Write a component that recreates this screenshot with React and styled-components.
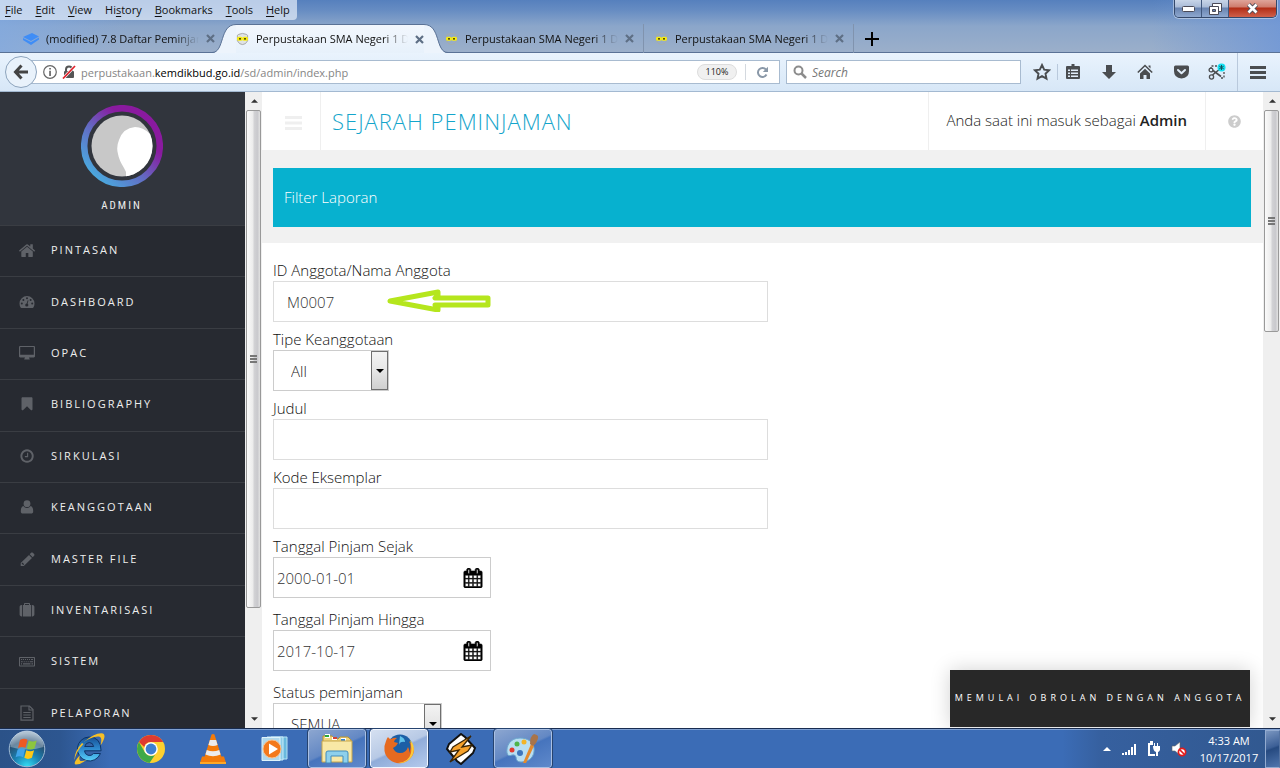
import React from "react";
import styled, { createGlobalStyle, css } from "styled-components";
import { FaQuestionCircle } from "react-icons/fa";

const ui = `"Open Sans", "Noto Sans", sans-serif`;

const Global = createGlobalStyle`
  * { box-sizing: border-box; }
  html, body, #root { height: 100%; }
  body { margin: 0; font-family: ${ui}; overflow: hidden; }
  button, input, select { font-family: inherit; margin: 0; }
  button { border: 0; background: none; padding: 0; color: inherit; }
  a { color: inherit; text-decoration: none; }
  ul { list-style: none; margin: 0; padding: 0; }
  svg { display: block; }
`;

const Screen = styled.div`
  height: 100vh;
  display: flex;
  flex-direction: column;
  overflow: hidden;
  color: #111;
`;

/* ---------- browser frame ---------- */
const Frame = styled.header`
  position: relative;
  flex: none;
  font-size: 11px;
  background:
    linear-gradient(90deg, rgba(130,170,225,.75), rgba(130,170,225,0) 10%, rgba(130,170,225,0) 90%, rgba(110,150,215,.8)),
    linear-gradient(#5680bd 0, #668cc2 10px, #8ba6ca 26px, #9bafca 52px);
`;
const MenuBar = styled.nav`
  display: flex;
  align-items: center;
  width: max-content;
  height: 20px;
  gap: 13px;
  padding: 0 7px 2px 5px;
  border-bottom-right-radius: 4px;
  background: rgba(225, 234, 248, .72);
  u { text-underline-offset: 2px; }
`;
const WindowControls = styled.div`
  position: absolute;
  top: 0;
  right: 3px;
  display: flex;
  height: 18px;
  border: 1px solid #34486a;
  border-top: 0;
  border-radius: 0 0 5px 5px;
  overflow: hidden;
  box-shadow: 0 0 0 1px rgba(255,255,255,.4);
`;
const WindowButton = styled.button`
  display: grid;
  place-items: center;
  width: ${p => (p.$close ? 47 : 27)}px;
  border-right: ${p => (p.$close ? 0 : "1px solid #40577d")};
  background: ${p => p.$close
    ? "linear-gradient(#dfa59a 0, #cf7c6c 7px, #b22d16 8px, #d0604a 17px)"
    : "linear-gradient(#c8d5e8 0, #a9bbd7 7px, #6883b0 8px, #8ea8cf 17px)"};
`;
const Tabs = styled.div`
  display: flex;
  height: 33px;
  padding: 4px 0 0 14px;
  border-bottom: 1px solid #5a7296;
`;
const Tab = styled.div`
  display: flex;
  align-items: center;
  width: 210px;
  height: 29px;
  padding: 0 9px;
  gap: 7px;
  ${p => p.$divided && css`
    padding-left: 11px;
    border-right: 1px solid #8093ae;
  `}
`;
const ActiveTab = styled.div`
  position: relative;
  z-index: 1;
  display: flex;
  height: 29px;
  margin: 0 -14px 0 -12px;
  width: 236px;
`;
const ActiveBody = styled.div`
  flex: 1;
  display: flex;
  align-items: center;
  gap: 7px;
  min-width: 0;
  border-top: 1px solid #5a7296;
  background: linear-gradient(#f2f7fd, #e7f1fb);
`;
const TabTitle = styled.span`
  flex: 1;
  overflow: hidden;
  white-space: nowrap;
  line-height: 18px;
  mask-image: linear-gradient(90deg, #000 84%, transparent);
`;
const NewTab = styled.button`
  display: grid;
  place-items: center;
  width: 36px;
  height: 29px;
`;
const Toolbar = styled.div`
  display: flex;
  align-items: center;
  height: 39px;
  padding: 0 4px 0 5px;
  border-bottom: 1px solid #a3b9d1;
  background: linear-gradient(#e9f3fd, #d7e7f7);
  color: #4a4d50;
`;
const Back = styled.button`
  z-index: 1;
  flex: none;
  display: grid;
  place-items: center;
  width: 32px;
  height: 32px;
  border: 1px solid #8da4bd;
  border-radius: 50%;
  background: #e9f2fb;
`;
const AddressBar = styled.div`
  flex: 1;
  display: flex;
  align-items: center;
  gap: 5px;
  height: 24px;
  margin: 0 6px 0 -7px;
  padding-left: 12px;
  border: 1px solid #a8bbd0;
  background: #fff;
`;
const AddressText = styled.span`
  flex: 1;
  font-size: 11px;
  color: #858585;
  b { font-weight: 400; color: #000; }
`;
const ZoomBadge = styled.button`
  width: 40px;
  height: 16px;
  border: 1px solid #ddd;
  border-radius: 8px;
  background: #f0f0f0;
  color: #222;
  font-size: 9px;
  line-height: 12px;
`;
const Reload = styled.button`
  display: grid;
  place-items: center;
  width: 34px;
  height: 16px;
  margin-left: 3px;
  border-left: 1px solid #d4d9df;
`;
const SearchBox = styled.label`
  display: flex;
  align-items: center;
  gap: 5px;
  width: 235px;
  height: 24px;
  padding: 0 6px;
  border: 1px solid #a8bbd0;
  background: #fff;
  input {
    flex: 1; min-width: 0; border: 0; outline: 0; padding: 0; background: none;
    font-size: 12px; font-style: italic;
  }
  input::placeholder { color: #777; opacity: 1; }
`;
const ToolButton = styled.button`
  display: grid;
  place-items: center;
  width: ${p => (p.$narrow ? 30 : 36)}px;
  height: 30px;
  margin-right: ${p => (p.$spaced ? 3 : 0)}px;
`;
const ToolGroup = styled.div`
  display: flex;
  align-items: center;
  margin-left: 6px;
`;
const Rule = styled.i`
  width: 1px;
  height: ${p => (p.$tall ? 38 : 16)}px;
  margin: ${p => (p.$tall ? "0 2px" : 0)};
  background: #b9c9dc;
`;

/* ---------- page ---------- */
const Page = styled.div`
  flex: 1;
  min-height: 0;
  display: flex;
  background: #fff;
`;
const Sidebar = styled.aside`
  flex: none;
  width: 245px;
  overflow: hidden;
  background: #272a31;
  color: #eee;
`;
const Profile = styled.div`
  display: flex;
  flex-direction: column;
  align-items: center;
  height: 133px;
  padding: 13px 2px 0 0;
  gap: 11px;
  background: #31353d;
`;
const ProfileName = styled.strong`
  font: 400 11px/16px "Liberation Sans Narrow", "Roboto Condensed", ${ui};
  letter-spacing: 2px;
`;
const SideList = styled.ul`
  display: grid;
  grid-template-rows: repeat(10, 1fr);
  height: 514px;
`;
const SideItem = styled.li`
  border-top: 1px solid #3a3d43;
  a {
    display: flex;
    align-items: center;
    gap: 14px;
    height: 100%;
    padding: 0 0 2px 17px;
    font-size: 11px;
    letter-spacing: 2px;
    line-height: 16px;
  }
  svg { color: #5f6268; }
`;
const Scroll = styled.div`
  flex: none;
  display: flex;
  flex-direction: column;
  width: 17px;
  padding-left: 1px;
  background: #efefef;
`;
const ScrollArrow = styled.button`
  display: grid;
  place-items: center;
  height: 18px;
`;
const ScrollTrack = styled.div`
  flex: 1;
  padding-right: 1px;
`;
const ScrollThumb = styled.div`
  display: grid;
  place-items: center;
  height: ${p => p.$size};
  border: 1px solid #999;
  border-radius: 2px;
  background: linear-gradient(90deg, #fafafa, #ececec 45%, #d2d2d5 55%, #c9c9cd 80%, #e2e2e2);
`;
const Main = styled.main`
  position: relative;
  flex: 1;
  min-width: 0;
  overflow: hidden;
  font-weight: 300;
  font-size: 15px;
`;
const TopBar = styled.div`
  display: flex;
  height: 58px;
`;
const TopCell = styled.div`
  display: grid;
  place-items: center;
  flex: none;
  width: ${p => (p.$kind === "text" ? "auto" : "58px")};
  padding: ${p => ({ menu: "4px 0 0 5px", text: "0 18px 2px 17px" })[p.$kind] || "0"};
  border-left: ${p => (p.$kind === "menu" ? "0" : "1px solid #efefef")};
  color: #222;
  b { font-weight: 600; }
`;
const Title = styled.h1`
  flex: 1;
  margin: 0;
  padding-left: 11px;
  border-left: 1px solid #efefef;
  font-size: 22px;
  letter-spacing: 1px;
  line-height: 58px;
  font-weight: 300;
  color: #14a5cb;
`;
const Band = styled.section`
  padding: 18px 12px 16px 11px;
  background: #f1f1f1;
`;
const Banner = styled.h2`
  margin: 0;
  padding-left: 11px;
  font-size: 15px;
  font-weight: 300;
  line-height: 59px;
  background: #07b1cf;
  color: #fff;
`;
const Form = styled.form`
  padding: 17px 11px 0;
  color: #111;
`;
const Field = styled.div`
  position: relative;
  margin-bottom: ${p => (p.$date ? 11 : 7)}px;
  label {
    display: block;
    width: max-content;
    line-height: 21px;
  }
`;
const TextInput = styled.input`
  display: block;
  width: 495px;
  max-width: 100%;
  height: 41px;
  padding: 0 13px;
  border: 1px solid #ddd;
  background: #fff;
  font-size: 15px;
  font-weight: 300;
  color: #333;
`;
const DateBox = styled.div`
  display: flex;
  align-items: center;
  width: 218px;
  height: 41px;
  padding: 0 7px 0 3px;
  border: 1px solid #ccc;
  input {
    flex: 1; min-width: 0; border: 0; padding: 0; outline: 0;
    font-size: 15px; font-weight: 300; color: #333;
  }
  svg { color: #000; stroke: #000; stroke-width: 50; }
`;
const SelectBox = styled.div`
  position: relative;
  width: ${p => p.$width}px;
  select {
    appearance: none;
    width: 100%;
    height: 41px;
    padding: 0 18px 0 17px;
    border: 1px solid #ccc;
    border-radius: 0;
    background: #fff;
    font-size: 15px;
    font-weight: 300;
    color: #222;
  }
`;
const SelectArrow = styled.span`
  position: absolute;
  top: 1px;
  right: 1px;
  bottom: 1px;
  display: grid;
  place-items: center;
  width: 17px;
  border: 1px solid #6f6f6f;
  background: linear-gradient(#f3f3f3, #e6e6e6 50%, #d0d0d0);
  pointer-events: none;
`;
const Marker = styled.svg`
  position: absolute;
  left: 113px;
  top: 28px;
`;
const Chat = styled.button`
  position: absolute;
  right: 13px;
  bottom: 1px;
  width: 300px;
  height: 57px;
  padding-bottom: 2px;
  background: #282828;
  color: #fff;
  font-size: 9px;
  letter-spacing: 4px;
  white-space: nowrap;
  box-shadow: 0 0 20px rgba(0, 0, 0, .18);
`;

/* ---------- task bar ---------- */
const TaskBar = styled.footer`
  flex: none;
  display: flex;
  height: 40px;
  border-top: 1px solid #182c50;
  box-shadow: inset 0 1px 0 #7fa0d2;
  background: linear-gradient(90deg, #2b5288 0, #2d5690 60px, #3b6cb6 110px, #3b6cb6 83%, #36609f 86%, #31588f 100%);
`;
const StartButton = styled.button`
  display: grid;
  place-items: center;
  width: 54px;
  margin-right: 6px;
`;
const TaskList = styled.div`
  flex: 1;
  display: flex;
  gap: 4px;
`;
const Task = styled.button`
  display: grid;
  place-items: center;
  width: 58px;
  ${p => p.$open && css`
    border: 1px solid ${p.$front ? "#f2f7ff" : "#a9c0e4"};
    border-radius: 3px;
    outline: 1px solid #26436f;
    background: ${p.$front
      ? "linear-gradient(155deg, #d5e0f1 0, #b7c9e5 48%, #90acd9 52%, #b4caec)"
      : "linear-gradient(155deg, #8ca6d0 0, #6388c4 48%, #4674bd 52%, #5f89cb)"};
  `}
`;
const Tray = styled.div`
  display: flex;
  align-items: center;
  gap: 10px;
  color: #fff;
`;
const Clock = styled.time`
  width: 60px;
  margin-left: 2px;
  text-align: center;
  font-size: 11px;
  line-height: 17px;
`;
const ShowDesktop = styled.button`
  width: 15px;
  height: 38px;
  margin-left: -4px;
  border: 1px solid #93abd0;
  border-right-color: #5472a0;
  background: linear-gradient(160deg, #7a96c0, #3c5f96 45%, #264a80 50%, #4f75ad);
`;

/* ---------- icons ---------- */
const Ico = ({ size = 16, box = "0 0 1792 1792", children, d }) => (
  <svg width={size} height={size} viewBox={box} fill="currentColor" aria-hidden="true">
    {d ? <path d={d} /> : children}
  </svg>
);
const HOME = "M1472 992v480q0 26-19 45t-45 19h-384v-384h-256v384h-384q-26 0-45-19t-19-45v-480q0-1 .5-3t.5-3l575-474 575 474q1 2 1 6zm223-69l-62 74q-8 9-21 11h-3q-13 0-21-7l-692-577-692 577q-12 8-24 7-13-2-21-11l-62-74q-8-10-7-23.5t11-21.5l719-599q32-26 76-26t76 26l244 204v-195q0-14 9-23t23-9h192q14 0 23 9t9 23v408l219 182q10 8 11 21.5t-7 23.5z";
const BOOKMARK = "M1420 128q23 0 44 9 33 13 52.5 41t19.5 62v1289q0 34-19.5 62t-52.5 41q-19 8-44 8-48 0-83-32l-441-424-441 424q-36 33-83 33-23 0-44-9-33-13-52.5-41t-19.5-62v-1289q0-34 19.5-62t52.5-41q21-9 44-9h1048z";
const CLOCK = "M1024 544v448q0 14-9 23t-23 9h-320q-14 0-23-9t-9-23v-64q0-14 9-23t23-9h224v-352q0-14 9-23t23-9h64q14 0 23 9t9 23zm416 352q0-148-73-273t-198-198-273-73-273 73-198 198-73 273 73 273 198 198 273 73 273-73 198-198 73-273zm224 0q0 209-103 385.5t-279.5 279.5-385.5 103-385.5-103-279.5-279.5-103-385.5 103-385.5 279.5-279.5 385.5-103 385.5 103 279.5 279.5 103 385.5z";
const CALENDAR = "M192 1664h288v-288h-288v288zm352 0h320v-288h-320v288zm-352-352h288v-320h-288v320zm352 0h320v-320h-320v320zm-352-384h288v-288h-288v288zm736 736h320v-288h-320v288zm-384-736h320v-288h-320v288zm768 736h288v-288h-288v288zm-384-352h320v-320h-320v320zm-352-864v-288q0-13-9.5-22.5t-22.5-9.5h-64q-13 0-22.5 9.5t-9.5 22.5v288q0 13 9.5 22.5t22.5 9.5h64q13 0 22.5-9.5t9.5-22.5zm736 864h288v-320h-288v320zm-384-384h320v-288h-320v288zm384 0h288v-288h-288v288zm32-480v-288q0-13-9.5-22.5t-22.5-9.5h-64q-13 0-22.5 9.5t-9.5 22.5v288q0 13 9.5 22.5t22.5 9.5h64q13 0 22.5-9.5t9.5-22.5zm384-64v1280q0 52-38 90t-90 38h-1408q-52 0-90-38t-38-90v-1280q0-52 38-90t90-38h128v-96q0-66 47-113t113-47h64q66 0 113 47t47 113v96h384v-96q0-66 47-113t113-47h64q66 0 113 47t47 113v96h128q52 0 90 38t38 90z";

const S = ({ children }) => <Ico size={20} box="0 0 20 20">{children}</Ico>;
const bg = "#272a31";
const sideItems = [
  ["PINTASAN", <Ico size={20} box="-110 -160 2000 2000" d={HOME} />],
  ["DASHBOARD", <S>
    <path d="M10 4a7.500 7.500 0 0 0-7.500 7.500c0 1.500.4 2.900 1.100 4.100.2.300.4.400.7.400h11.400c.3 0 .5-.1.7-.4.700-1.200 1.100-2.600 1.100-4.100A7.500 7.500 0 0 0 10 4z" />
    <g fill={bg}><circle cx="4.800" cy="11.600" r="1" /><circle cx="6.400" cy="7.900" r="1" /><circle cx="10" cy="6.300" r="1" /><circle cx="13.600" cy="7.900" r="1" /><circle cx="15.200" cy="11.600" r="1" /><circle cx="9.800" cy="13" r="1.600" /></g>
    <path d="M9.800 13l1.200-4.600" stroke={bg} strokeWidth=".9" />
  </S>],
  ["OPAC", <S><path fillRule="evenodd" d="M3.200 3h13.600c.7 0 1.200.5 1.200 1.200v9.100c0 .700-.5 1.200-1.200 1.200H12c0 .9.800 1.200.8 1.700 0 .3-.2.400-.4.400H7.600c-.2 0-.4-.1-.4-.4 0-.5.8-.800.8-1.700H3.200c-.7 0-1.200-.5-1.200-1.200V4.200C2 3.500 2.500 3 3.200 3zm0 1v7.800h13.600V4z" /></S>],
  ["BIBLIOGRAPHY", <Ico size={20} box="-270 -190 2330 2200" d={BOOKMARK} />],
  ["SIRKULASI", <Ico size={20} box="-260 -260 2300 2300" d={CLOCK} />],
  ["KEANGGOTAAN", <S><circle cx="10" cy="6.700" r="3.400" /><path d="M6.400 9c-2 .5-2.600 2.800-2.600 5.400 0 1.300.8 2.100 2.100 2.100h8.200c1.300 0 2.100-.8 2.100-2.100 0-2.600-.6-4.900-2.600-5.400-.9 1.200-2.100 1.900-3.600 1.900S7.300 10.200 6.400 9z" /></S>],
  ["MASTER FILE", <S><path fillRule="evenodd" d="M12 5.900l3 3-8.200 8.200H3.700V14zM6.300 16l.8-.8-1.600-1.600-.8.8v.7h.9v.9zM12.700 5.200l1.400-1.400c.5-.5 1.200-.5 1.700 0l1.300 1.300c.5.5.5 1.200 0 1.700l-1.400 1.400z" /></S>],
  ["INVENTARISASI", <S><path fillRule="evenodd" d="M7 5V3.800c0-.5.3-.8.8-.8h4.400c.5 0 .8.3.8.800V5h1v11.500H6V5zm1 0h4V4H8zM5.200 5v11.500h-.6c-1.200 0-2-.8-2-1.900V6.900C2.600 5.800 3.400 5 4.600 5zM14.800 5h.6c1.200 0 2 .8 2 1.900v7.700c0 1.100-.8 1.900-2 1.900h-.6z" /></S>],
  ["SISTEM", <S><path fillRule="evenodd" d="M3 6h14c.6 0 1 .4 1 1v7.500c0 .6-.4 1-1 1H3c-.6 0-1-.4-1-1V7c0-.6.4-1 1-1zm0 1v7.500h14V7z" /><path d="M4 8.500h1.200M6 8.500h1M8 8.500h1M10 8.500h1M12 8.500h1M14 8.500h2M4 10.700h1.700M6.700 10.700h1M8.700 10.700h1M10.700 10.700h1M12.700 10.700h3.300M4 12.900h1M6 12.900h7.500M14.500 12.900h1.500" stroke="currentColor" strokeWidth="1.100" /></S>],
  ["PELAPORAN", <S><path d="M4 3h8.500L16 6.500v10.700H4z" fill="none" stroke="currentColor" strokeWidth="1.200" /><path d="M12 3v4h4M6.300 9.500h7.400M6.300 12h7.400M6.300 14.500h7.400" fill="none" stroke="currentColor" strokeWidth="1.100" /></S>],
];

const Close = () => (
  <svg width="9" height="9" viewBox="0 0 9 9" aria-hidden="true"><path d="M1 1l7 7M8 1L1 8" stroke="#5e6f85" strokeWidth="2.200" /></svg>
);
const Owl = ({ shield }) => (
  <svg width="13" height="14" viewBox="0 0 14 14" aria-hidden="true">
    <path d="M1.500 3L3 2q4-2 8 0l1.500 1v6q-2 4-5.500 4T1.500 9z" fill={shield ? "#dfe3e4" : "none"} stroke={shield ? "#9b9b9b" : "#a9a9a6"} strokeWidth=".9" />
    <rect x="1" y="4.500" width="6.200" height="4.500" rx="2" fill="#f7ec12" />
    <rect x="6.800" y="4.500" width="6.200" height="4.500" rx="2" fill="#f7ec12" />
    <circle cx="4.300" cy="6.800" r=".9" /><circle cx="9.700" cy="6.800" r=".9" />
  </svg>
);
const Edge = ({ flip }) => (
  <svg width="24" height="29" viewBox="0 0 24 29" transform={flip ? "scale(-1 1)" : undefined} aria-hidden="true">
    <path d="M0 29C13 29 7 .5 24 .5V29z" fill="#edf4fc" />
    <path d="M0 28.500C13 28.500 7 .5 24 .5" fill="none" stroke="#5a7296" />
  </svg>
);
const Bars = ({ w, h, t, color }) => (
  <svg width={w} height={h} viewBox={`0 0 ${w} ${h}`} fill={color} aria-hidden="true">
    <rect width={w} height={t} /><rect y={(h - t) / 2} width={w} height={t} /><rect y={h - t} width={w} height={t} />
  </svg>
);
const Triangle = ({ up, color = "#333", w = 8, h = 4 }) => (
  <svg width={w} height={h} viewBox="0 0 8 4" aria-hidden="true"><path d={up ? "M0 4h8L4 0z" : "M0 0h8L4 4z"} fill={color} /></svg>
);

function ScrollBar({ size }) {
  return (
    <Scroll>
      <ScrollArrow aria-label="Scroll up"><Triangle up w={7} /></ScrollArrow>
      <ScrollTrack><ScrollThumb $size={size}><Bars w={7} h={8} t={2} color="#777" /></ScrollThumb></ScrollTrack>
      <ScrollArrow aria-label="Scroll down"><Triangle w={7} /></ScrollArrow>
    </Scroll>
  );
}

const BackArrow = () => (
  <svg width="16" height="16" viewBox="0 0 16 16" fill="none" stroke="#444" strokeWidth="3" aria-hidden="true"><path d="M8.500 1.500L2.500 8l6 6.500M3 8h12" /></svg>
);
const Info = () => (
  <svg width="14" height="14" viewBox="0 0 14 14" aria-hidden="true"><circle cx="7" cy="7" r="6.300" fill="none" stroke="#666" strokeWidth="1.200" /><path d="M6.200 3h1.700v1.600H6.200zM6.200 5.800h1.700V11H6.200z" fill="#666" /></svg>
);
const Insecure = () => (
  <svg width="14" height="14" viewBox="0 0 14 14" aria-hidden="true"><path d="M4 6V4.500a3 3 0 0 1 6 0V6" fill="none" stroke="#555" strokeWidth="2" /><rect x="2" y="6" width="10" height="7" rx="1" fill="#555" /><path d="M1 13.500L13 1" stroke="#fff" strokeWidth="3" /><path d="M1 13.500L13 1" stroke="#e0202a" strokeWidth="1.700" /></svg>
);

const tools = [
  ["Library", <svg width="16" height="16" viewBox="0 0 16 16"><path d="M6.500 0h3v2H14q1 0 1 1v11q0 1-1 1H2q-1 0-1-1V3q0-1 1-1h4.500z" fill="#4a4d50" /><path d="M3 5.500h2v1.500H3zM6 5.500h7v1.500H6zM3 8.500h2V10H3zM6 8.500h7V10H6zM3 11.500h2V13H3zM6 11.500h7V13H6z" fill="#e1edf9" /></svg>],
  ["Downloads", <svg width="16" height="16" viewBox="0 0 16 16"><path d="M5 1h6v7h4l-7 7-7-7h4z" fill="#4a4d50" /></svg>],
  ["Home", <svg width="16" height="16" viewBox="0 0 16 16"><path d="M.8 8.500L8 1.500l7.200 7" fill="none" stroke="#4a4d50" strokeWidth="1.600" /><path d="M3 9.500l5-4.800 5 4.800V15H9.500v-4h-3v4H3zM11.500 1.500h2v3l-2-2z" fill="#4a4d50" /></svg>],
  ["Pocket", <svg width="17" height="16" viewBox="0 0 17 16"><path d="M2.500 1.500h12q1.500 0 1.500 1.500v4q0 7-7.500 7.500Q1 14 1 7V3q0-1.500 1.500-1.500z" fill="#4a4d50" /><path d="M5 6l3.500 3.300L12 6" fill="none" stroke="#e1edf9" strokeWidth="2" strokeLinecap="round" strokeLinejoin="round" /></svg>],
  ["Clip", <svg width="18" height="18" viewBox="0 0 18 18"><path d="M3 6V3h8M16 9v6h-3" fill="none" stroke="#4a4d50" strokeWidth="1.300" strokeDasharray="2 1.500" /><path d="M4.500 12l8-6.500M5 7.500l8 6" stroke="#4a4d50" strokeWidth="1.600" /><circle cx="3" cy="7" r="1.900" fill="none" stroke="#4a4d50" strokeWidth="1.300" /><circle cx="3.500" cy="14" r="2.100" fill="none" stroke="#4a4d50" strokeWidth="1.300" /><circle cx="13.500" cy="4.500" r="4" fill="#13e0f2" /><path d="M13.500 2v5M11.300 3.200l4.400 2.600M15.700 3.200l-4.400 2.600" stroke="#14555d" strokeWidth="1" /></svg>],
];

const Orb = () => (
  <svg width="40" height="38" viewBox="0 0 40 38" aria-hidden="true">
    <defs><radialGradient id="orb" cx=".5" cy="1" r=".95"><stop offset="0" stopColor="#35e0f5" /><stop offset=".4" stopColor="#1a83b4" /><stop offset=".75" stopColor="#274f72" /><stop offset="1" stopColor="#8ba6bd" /></radialGradient></defs>
    <circle cx="20" cy="19" r="17.800" fill="url(#orb)" stroke="#9db8d2" />
    <path d="M3.500 17a16.500 16.500 0 0 1 33 0q-16 5-33 0z" fill="#fff" opacity=".32" />
    <path d="M13 10q4-2.500 7.500-.2l-2 8Q15 16 11 18z" fill="#ee5a24" />
    <path d="M21.700 10.500q4 2.200 8 0l-2.200 8q-4 2-7.700 0z" fill="#8cc63f" />
    <path d="M10.600 19.500q4-2 7.500.1l-2 7.600q-3.500-2-7.500 0z" fill="#3fa4ea" />
    <path d="M19.300 20.300q4 2 7.800 0l-2.200 7.500q-4 2.300-7.600 0z" fill="#fdc816" />
  </svg>
);
const taskIcons = [
  ["Internet Explorer", <svg width="34" height="34" viewBox="0 0 34 34"><defs><linearGradient id="ie" x2="0" y2="1"><stop stopColor="#164f94" /><stop offset=".5" stopColor="#2f8bd0" /><stop offset="1" stopColor="#59d0fa" /></linearGradient></defs><path d="M17 5a12 12 0 1 0 11.500 16.500h-7a5 5 0 0 1-9-2.700h16.600Q29 5 17 5zm-4.300 9.500q1-4 4.600-4t4.400 4z" fill="url(#ie)" fillRule="evenodd" stroke="#0f3468" strokeWidth="1" /><path d="M8 23Q0 32 4 32.500q5 0 11-5Q5 32 8 23zM11 10.500Q24 0 31 1.500q4 2-2.500 12Q31 4 26 4.500q-7 .5-15 6zM10 11Q2 20 2.500 28q2-9 9-16z" fill="#f5bf27" /></svg>],
  ["Chrome", <svg width="30" height="30" viewBox="0 0 30 30"><circle cx="15" cy="15" r="14" fill="#fdd02f" /><path d="M2.900 8A14 14 0 0 1 27.200 8H15a7 7 0 0 0-6.800 5z" fill="#de3b30" /><path d="M2.900 8a14 14 0 0 0 10.600 20.900l5.600-8.200A7 7 0 0 1 9 18.500z" fill="#3fa948" /><circle cx="15" cy="15" r="6.800" fill="#fff" /><circle cx="15" cy="15" r="5.400" fill="#3d7fd0" /></svg>],
  ["VLC", <svg width="28" height="32" viewBox="0 0 28 32"><path d="M3 23.500h22l2 6.500H1z" fill="#f37b0a" /><path d="M1 29h26v2H1z" fill="#ffa726" /><path d="M12.500 1.500q1.500-1 3 0l7 22.500q-8.500 4.500-17 0z" fill="#f37b0a" /><path d="M10.900 7h6.200l1.500 5q-4.500 2-9.200 0zM7.800 17q6.200 2.500 12.400 0l1.400 4.500q-7.600 3.500-15.200 0z" fill="#ececec" /></svg>],
  ["Media Player", <svg width="30" height="30" viewBox="0 0 30 30"><path d="M11 3h16v22H11z" fill="#69b9de" stroke="#b7e2f5" /><path d="M7 3h16v23H7z" fill="#8ccbe7" stroke="#c8ebf8" /><path d="M2 3.500h18v23H2z" fill="#afd8ec" stroke="#dff3fb" /><circle cx="12" cy="15" r="9" fill="#f3791b" stroke="#fbc18d" /><path d="M9 9.500L18 15l-9 5.500z" fill="#fff" /></svg>],
  ["Explorer", <svg width="34" height="32" viewBox="0 0 34 32"><path d="M3 3h9l2 3h4l2-2h8l3 3v20H3z" fill="#efd57e" stroke="#b99432" /><path d="M5 1h5v4H5zM12 4h5v3h-5zM21 5h5v3h-5z" fill="#fff" /><path d="M5 2h4v2H5z" fill="#2aa83c" /><path d="M13 4h4v2h-4z" fill="#d44434" /><path d="M21 6h4v2h-4z" fill="#3584d4" /><path d="M2 8h30v21H2z" fill="#f8e8a6" stroke="#c6a64c" /><path d="M6 30V20q0-2 2-2h18q2 0 2 2v10h-5v-7H11v7z" fill="#8ed0ec" stroke="#438cbc" /></svg>, "open"],
  ["Firefox", <svg width="32" height="32" viewBox="0 0 32 32"><circle cx="17" cy="14" r="12.500" fill="#1c5fa6" /><path d="M17 3q5 2 5 6-5-1-6 3z" fill="#5fc2ea" /><path d="M3 8q1-3 2-4 1 2 3 2 3-2 6-1-3 2-3 4l4 1-2 3-3 2q2 5 7 5 6 0 8-6 2 3 1 6 3-6 0-12 5 5 5 10A15 15 0 0 1 1.500 18Q1 12 3 8z" fill="#e66a20" /><path d="M27 7q5 5 3.500 12A14 14 0 0 1 15 30q11-1 13-10 1-7-1-13z" fill="#fbcb3a" /></svg>, "front"],
  ["Winamp", <svg width="32" height="32" viewBox="0 0 32 32"><path d="M16 1l4 3 10 11-2 5-12 11-4-3L2 16l2-5z" fill="#fff" stroke="#111" strokeWidth="2" /><path d="M26 3L8 14l-3 5 9-2-9 12 18-11 4-6-10 2z" fill="#f6a12a" stroke="#3a2505" strokeWidth="1.300" /></svg>],
  ["Paint", <svg width="34" height="32" viewBox="0 0 34 32"><path d="M14 5C4 5 0 13 1 20q1 4 5 2 3-1 4 2 0 5 5 5c9 0 14-6 13-14-1-6-6-10-14-10z" fill="#b8def2" stroke="#6ba5cc" /><circle cx="14" cy="20" r="3" fill="#3e76bc" /><circle cx="6" cy="17" r="2.500" fill="#e23b31" /><circle cx="11" cy="11" r="2.500" fill="#50b44b" /><circle cx="18" cy="9" r="2.500" fill="#f3b427" /><path d="M17 30l8-19 3 2-8 17z" fill="#e48a2d" /><path d="M24 11q0-8 4-10 5 1 4 4-1 5-5 8z" fill="#a8744a" /></svg>, "open"],
];

const menu = [["", "F", "ile"], ["", "E", "dit"], ["", "V", "iew"], ["Hi", "s", "tory"], ["", "B", "ookmarks"], ["", "T", "ools"], ["", "H", "elp"]];

function DateField({ id, label, value }) {
  return (
    <Field $date>
      <label htmlFor={id}>{label}</label>
      <DateBox>
        <input id={id} type="text" defaultValue={value} />
        <button type="button" aria-label="Pilih tanggal"><Ico size={20} box="-10 -10 1812 1812" d={CALENDAR} /></button>
      </DateBox>
    </Field>
  );
}
function SelectField({ id, label, value, width }) {
  return (
    <Field>
      <label htmlFor={id}>{label}</label>
      <SelectBox $width={width}>
        <select id={id}><option>{value}</option></select>
        <SelectArrow><Triangle color="#000" /></SelectArrow>
      </SelectBox>
    </Field>
  );
}

export default function App() {
  return (
    <Screen>
      <Global />
      <Frame>
        <MenuBar>{menu.map(([a, k, b]) => <span key={k + b}>{a}<u>{k}</u>{b}</span>)}</MenuBar>
        <WindowControls>
          <WindowButton aria-label="Minimize"><svg width="13" height="6"><rect x=".5" y=".5" width="12" height="5" rx="1" fill="#fff" stroke="#4b4b58" /></svg></WindowButton>
          <WindowButton aria-label="Restore"><svg width="13" height="12"><path d="M3.500.5h9v8h-9z" fill="#fff" stroke="#4b4b58" /><path d="M.5 3.500h9v8h-9z" fill="#fff" stroke="#4b4b58" /><path d="M3.500 6.500h3v2h-3z" fill="#6883b0" stroke="#4b4b58" /></svg></WindowButton>
          <WindowButton $close aria-label="Close"><svg width="13" height="11"><path d="M2.500 1.500l8 8M10.500 1.500l-8 8" stroke="#4b4b58" strokeWidth="4.500" /><path d="M2.500 1.500l8 8M10.500 1.500l-8 8" stroke="#fff" strokeWidth="2.700" /></svg></WindowButton>
        </WindowControls>
        <Tabs>
          <Tab>
            <svg width="16" height="14" viewBox="0 0 16 14" aria-hidden="true"><path d="M0 5l9-4 7 3.500L8 9z" fill="#3f8df6" /><path d="M0 6l8 4 8-4.500v2L8 13 0 8z" fill="#3f8df6" /></svg>
            <TabTitle>(modified) 7.8 Daftar Peminjaman</TabTitle>
            <button aria-label="Close tab"><Close /></button>
          </Tab>
          <ActiveTab>
            <Edge />
            <ActiveBody>
              <Owl shield />
              <TabTitle>Perpustakaan SMA Negeri 1 D</TabTitle>
              <button aria-label="Close tab"><Close /></button>
            </ActiveBody>
            <Edge flip />
          </ActiveTab>
          {[1, 2].map(n => (
            <Tab key={n} $divided>
              <Owl />
              <TabTitle>Perpustakaan SMA Negeri 1 D</TabTitle>
              <button aria-label="Close tab"><Close /></button>
            </Tab>
          ))}
          <NewTab aria-label="New tab"><svg width="14" height="14" stroke="#000" strokeWidth="2"><path d="M7 0v14M0 7h14" /></svg></NewTab>
        </Tabs>
        <Toolbar>
          <Back aria-label="Back"><BackArrow /></Back>
          <AddressBar>
            <Info /><Insecure />
            <AddressText>perpustakaan.<b>kemdikbud.go.id</b>/sd/admin/index.php</AddressText>
            <ZoomBadge>110%</ZoomBadge>
            <Reload aria-label="Reload"><svg width="13" height="13" viewBox="0 0 13 13"><path d="M10.500 8.500a4.500 4.500 0 1 1-.5-4.800" fill="none" stroke="#8a98a8" strokeWidth="2" /><path d="M12 .8V6H6.800z" fill="#8a98a8" /></svg></Reload>
          </AddressBar>
          <SearchBox>
            <svg width="14" height="14" viewBox="0 0 14 14" fill="none" stroke="#8c8c8c" aria-hidden="true"><circle cx="5.500" cy="5.500" r="4" strokeWidth="2" /><path d="M8.500 8.500l4.500 4.500" strokeWidth="2.500" /></svg>
            <input type="text" placeholder="Search" aria-label="Search" />
          </SearchBox>
          <ToolGroup>
            <ToolButton $narrow aria-label="Bookmark this page"><svg width="18" height="18" viewBox="0 0 18 18"><path d="M9 2l2.200 4.600 5 .6-3.700 3.500 1 5L9 13.200l-4.500 2.500 1-5L1.800 7.200l5-.6z" fill="none" stroke="#4a4d50" strokeWidth="1.900" /></svg></ToolButton>
            <Rule />
            {tools.map(([name, icon], i) => <ToolButton key={name} $narrow={i === 0} $spaced={i === 0} aria-label={name}>{icon}</ToolButton>)}
          </ToolGroup>
          <Rule $tall />
          <ToolButton aria-label="Open menu"><Bars w={16} h={13} t={3} color="#4a4d50" /></ToolButton>
        </Toolbar>
      </Frame>

      <Page>
        <Sidebar>
          <Profile>
            <svg width="82" height="82" viewBox="0 0 82 82" aria-label="Foto admin">
              <defs>
                <linearGradient id="ring" x1=".15" y1=".9" x2=".8" y2=".2"><stop stopColor="#4ba7de" /><stop offset=".45" stopColor="#6369c2" /><stop offset=".85" stopColor="#8a1a9f" /></linearGradient>
                <clipPath id="face"><circle cx="41" cy="41" r="30.500" /></clipPath>
              </defs>
              <circle cx="41" cy="41" r="37.800" fill="none" stroke="url(#ring)" strokeWidth="6.500" />
              <g clipPath="url(#face)">
                <rect width="82" height="82" fill="#c8c8c8" />
                <path d="M45 72v-5q-1-2-2-4-5-8-6-14-2-7 1-14 4-12 16-13 8 0 15 7l6 8v45z" fill="#fff" />
              </g>
            </svg>
            <ProfileName>ADMIN</ProfileName>
          </Profile>
          <SideList>
            {sideItems.map(([name, icon]) => <SideItem key={name}><a href="#">{icon}{name}</a></SideItem>)}
          </SideList>
        </Sidebar>
        <ScrollBar size="83%" />
        <Main>
          <TopBar>
            <TopCell $kind="menu"><button aria-label="Menu"><Bars w={17} h={14} t={3} color="#efefef" /></button></TopCell>
            <Title>SEJARAH PEMINJAMAN</Title>
            <TopCell $kind="text"><span>Anda saat ini masuk sebagai <b>Admin</b></span></TopCell>
            <TopCell $kind="help"><button aria-label="Bantuan"><FaQuestionCircle size={13} color="#ccc" /></button></TopCell>
          </TopBar>
          <Band><Banner>Filter Laporan</Banner></Band>
          <Form>
            <Field>
              <label htmlFor="anggota">ID Anggota/Nama Anggota</label>
              <TextInput id="anggota" defaultValue="M0007" />
              <Marker width="106" height="24" viewBox="0 0 106 24" fill="none" stroke="#b5e61d" strokeWidth="5" strokeLinejoin="round" aria-hidden="true">
                <path d="M4 13L52 4v4l-3 2h53v7H49l3 3v2z" />
              </Marker>
            </Field>
            <SelectField id="tipe" label="Tipe Keanggotaan" value="All" width={116} />
            <Field><label htmlFor="judul">Judul</label><TextInput id="judul" /></Field>
            <Field><label htmlFor="kode">Kode Eksemplar</label><TextInput id="kode" /></Field>
            <DateField id="sejak" label="Tanggal Pinjam Sejak" value="2000-01-01" />
            <DateField id="hingga" label="Tanggal Pinjam Hingga" value="2017-10-17" />
            <SelectField id="status" label="Status peminjaman" value="SEMUA" width={169} />
          </Form>
          <Chat>MEMULAI OBROLAN DENGAN ANGGOTA</Chat>
        </Main>
        <ScrollBar size="37%" />
      </Page>

      <TaskBar>
        <StartButton aria-label="Start"><Orb /></StartButton>
        <TaskList>
          {taskIcons.map(([name, icon, state]) => (
            <Task key={name} aria-label={name} $open={!!state} $front={state === "front"}>{icon}</Task>
          ))}
        </TaskList>
        <Tray>
          <Triangle up color="#fff" />
          <svg width="16" height="14" fill="#fff" aria-hidden="true"><path d="M1 11h2v2H1zM4 10h2v3H4zM7 8h2v5H7zM10 5h2v8h-2zM13 2h2v11h-2z" /></svg>
          <svg width="14" height="16" viewBox="0 0 14 16" aria-hidden="true"><path d="M6 3H2v11h6" fill="none" stroke="#fff" strokeWidth="2" /><path d="M3 0h3v2H3zM7 2h1v3h2V2h1v3h2v4q-1 2-2 2v4H9v-4q-3-1-3-6h1z" fill="#fff" /></svg>
          <svg width="16" height="16" viewBox="0 0 16 16" aria-hidden="true"><path d="M1 5h3l5-4v13l-5-4H1z" fill="#fff" stroke="#666" strokeWidth=".6" /><circle cx="11" cy="11" r="3.600" fill="#fff" stroke="#e31b1b" strokeWidth="1.700" /><path d="M8.500 8.500l5 5" stroke="#e31b1b" strokeWidth="1.700" /></svg>
          <Clock>4:33 AM<br />10/17/2017</Clock>
          <ShowDesktop aria-label="Show desktop" />
        </Tray>
      </TaskBar>
    </Screen>
  );
}
